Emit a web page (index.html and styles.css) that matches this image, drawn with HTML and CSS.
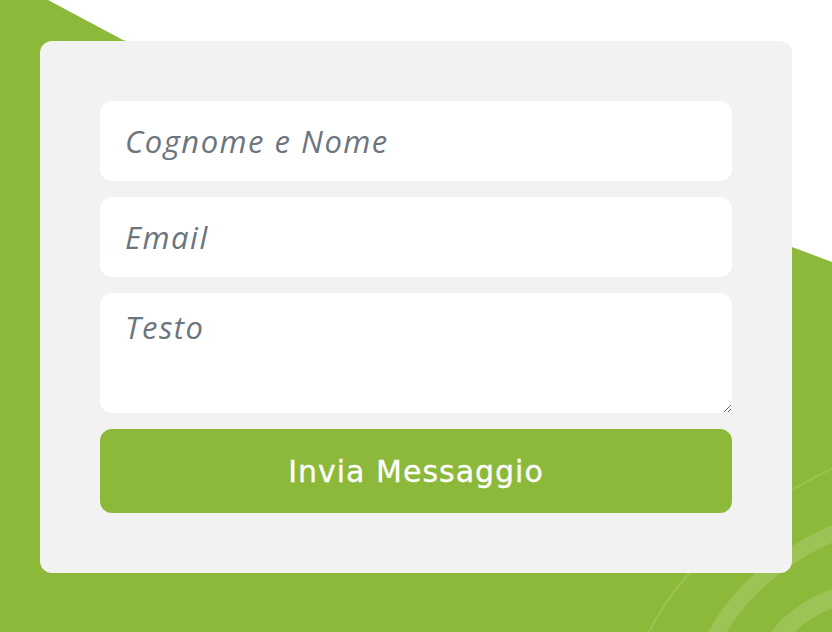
FILE: index.html
```html
<!DOCTYPE html>
<html lang="it">
<head>
<meta charset="utf-8">
<title>Contatti</title>
<link rel="stylesheet" href="styles.css">
</head>
<body>
<div class="page">
  <svg class="backdrop" viewBox="0 0 832 632" width="832" height="632" aria-hidden="true">
    <polygon points="48,0 123,40 460,144 792,247 832,262 832,0" fill="#ffffff"/>
    <path d="M 860 455 C 760 500, 680 560, 640 650" fill="none" stroke="rgba(255,255,255,0.13)" stroke-width="2"/>
    <path d="M 860 522 C 800 545, 740 580, 708 650" fill="none" stroke="rgba(255,255,255,0.14)" stroke-width="16"/>
    <path d="M 860 590 C 820 600, 790 615, 770 650" fill="none" stroke="rgba(255,255,255,0.14)" stroke-width="18"/>
  </svg>
  <form class="card" onsubmit="return false">
    <input class="field" type="text" placeholder="Cognome e Nome">
    <input class="field" type="email" placeholder="Email">
    <textarea class="field area" placeholder="Testo"></textarea>
    <button class="send" type="submit">Invia Messaggio</button>
  </form>
</div>
</body>
</html>
```
FILE: styles.css
```css
* { box-sizing: border-box; }
html, body { margin: 0; padding: 0; }
body {
  background: #8db93b;
  width: 832px;
  height: 632px;
  overflow: hidden;
}
.page {
  position: relative;
  padding: 41px 40px;
  height: 632px;
}
.backdrop {
  position: absolute;
  left: 0;
  top: 0;
}
.card {
  position: relative;
  background: #f2f2f2;
  border-radius: 12px;
  padding: 60px;
  display: flex;
  flex-direction: column;
  gap: 16px;
  margin: 0;
}
.field {
  display: block;
  width: 100%;
  height: 80px;
  border: none;
  outline: none;
  background: #ffffff;
  border-radius: 12px;
  padding: 0 25px;
  font-family: "Open Sans", sans-serif;
  font-style: italic;
  font-size: 31px;
  letter-spacing: 1.5px;
  color: #495057;
  margin: 0;
}
.field::placeholder {
  color: #6c757d;
  opacity: 1;
}
.area {
  height: 120px;
  padding: 14px 25px;
  resize: vertical;
  line-height: 1.3;
}
.send {
  display: block;
  width: 100%;
  height: 84px;
  border: none;
  border-radius: 12px;
  background: #8db93b;
  color: #ffffff;
  font-family: "DejaVu Sans", sans-serif;
  font-size: 30px;
  letter-spacing: 1px;
  font-weight: 400;
  -webkit-text-stroke: 0.3px #ffffff;
  cursor: pointer;
  margin: 0;
}
```
